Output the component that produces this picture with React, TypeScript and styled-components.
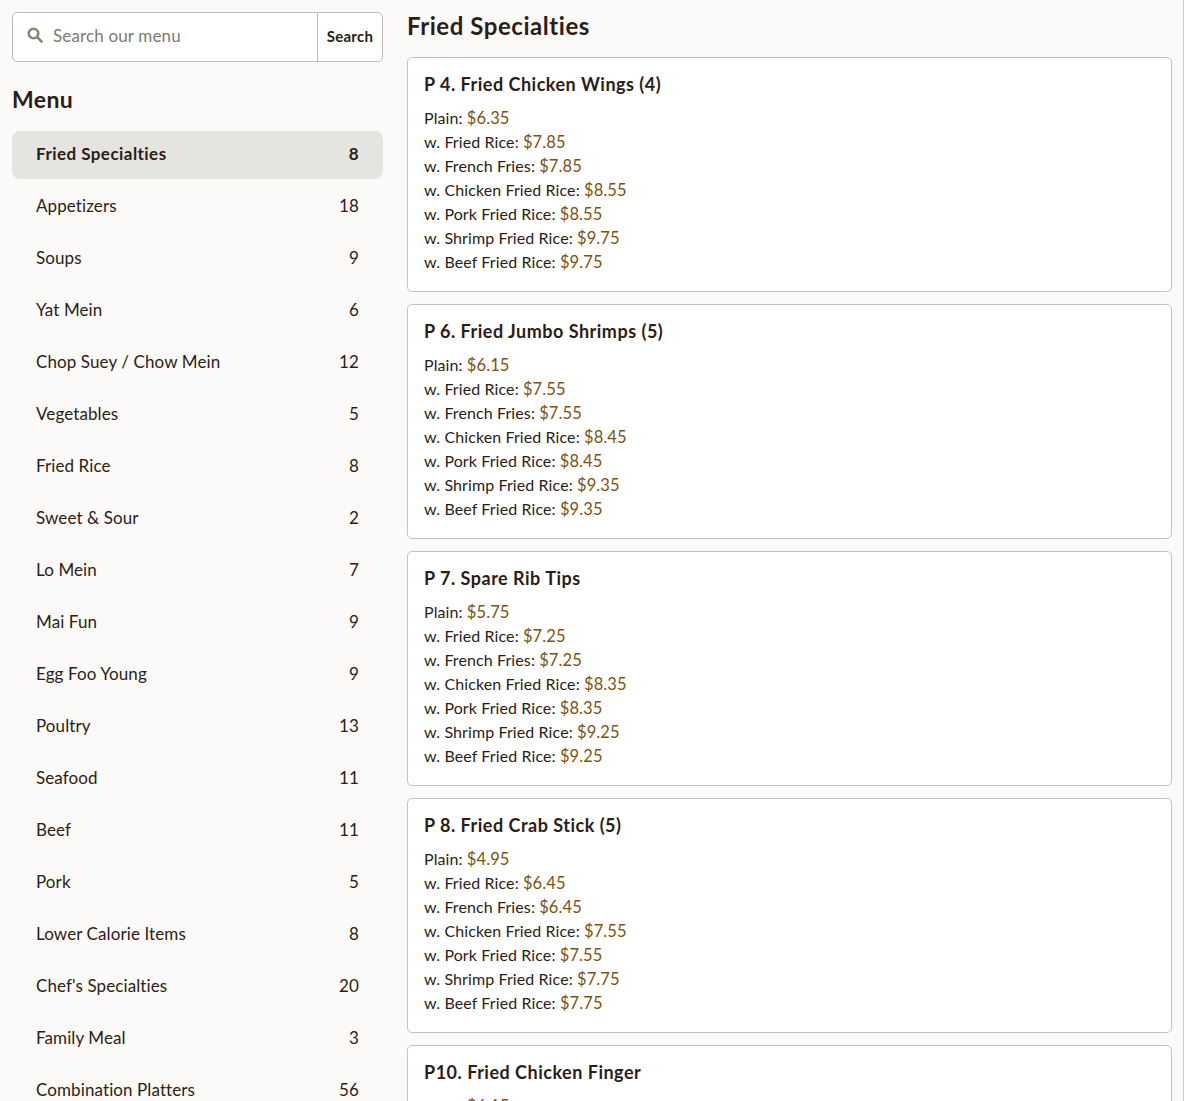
import React from 'react';
import styled, { createGlobalStyle } from 'styled-components';

const GlobalStyle = createGlobalStyle`
  html, body {
    margin: 0;
    height: 1101px;
    overflow: hidden;
    background: #ffffff;
  }
  * {
    box-sizing: border-box;
  }
`;

const Page = styled.div`
  width: 1184px;
  height: 1101px;
  overflow: hidden;
  display: grid;
  grid-template-columns: 371px 765px;
  column-gap: 24px;
  padding: 12px 12px 0;
  background: #fbfaf8;
  border-right: 1px solid #c9c8c5;
  font-family: 'Lato', sans-serif;
  color: #2b1d17;
`;

const Sidebar = styled.aside`
  display: flex;
  flex-direction: column;
`;

const SearchBar = styled.form`
  height: 50px;
  display: flex;
  background: #ffffff;
  border: 1px solid #bdbbb6;
  border-radius: 5px;
`;

const SearchField = styled.div`
  flex: 1;
  display: flex;
  align-items: center;
  gap: 10px;
  padding: 0 0 3px 14px;
  font-size: 17px;
  letter-spacing: 0.15px;
  color: #7d7a74;
`;

const SearchIconBox = styled.svg`
  flex: none;
  margin-top: -2px;
`;

const SearchButton = styled.button`
  width: 65px;
  padding: 0 0 2px;
  border: 0;
  border-left: 1px solid #bdbbb6;
  background: transparent;
  font-family: inherit;
  font-size: 15px;
  font-weight: 700;
  letter-spacing: 0.3px;
  color: #2b1d17;
`;

const SideTitle = styled.h2`
  margin: 23px 0 18px;
  font-size: 23px;
  line-height: 28px;
  font-weight: 700;
  letter-spacing: 0.4px;
`;

const CategoryList = styled.ul`
  list-style: none;
  margin: 0;
  padding: 0;
  display: flex;
  flex-direction: column;
  gap: 4px;
`;

const Category = styled.li<{ $active?: boolean }>`
  height: 48px;
  flex: none;
  display: flex;
  align-items: center;
  justify-content: space-between;
  padding: 0 24px 4px;
  border-radius: 8px;
  font-size: 17px;
  letter-spacing: ${props => (props.$active ? '0.45px' : '0.1px')};
  font-weight: ${props => (props.$active ? 700 : 400)};
  background: ${props => (props.$active ? '#e5e4e1' : 'transparent')};
`;

const Content = styled.main`
  display: flex;
  flex-direction: column;
`;

const SectionTitle = styled.h1`
  margin: 0 0 17px;
  font-size: 24px;
  line-height: 28px;
  font-weight: 700;
  letter-spacing: 0.55px;
`;

const Items = styled.div`
  display: flex;
  flex-direction: column;
  gap: 12px;
`;

const ItemCard = styled.article`
  flex: none;
  height: 235px;
  padding: 13px 16px 0;
  background: #ffffff;
  border: 1px solid #c4c2bd;
  border-radius: 5px;
`;

const ItemName = styled.h3`
  margin: 0 0 9px;
  font-size: 18px;
  line-height: 26px;
  font-weight: 700;
  letter-spacing: 0.5px;
`;

const PriceLine = styled.div`
  font-size: 16px;
  letter-spacing: 0.1px;
  line-height: 24px;
`;

const Price = styled.span`
  font-size: 16.5px;
  color: #7a5410;
`;

const categories: [string, number][] = [
  ['Fried Specialties', 8],
  ['Appetizers', 18],
  ['Soups', 9],
  ['Yat Mein', 6],
  ['Chop Suey / Chow Mein', 12],
  ['Vegetables', 5],
  ['Fried Rice', 8],
  ['Sweet & Sour', 2],
  ['Lo Mein', 7],
  ['Mai Fun', 9],
  ['Egg Foo Young', 9],
  ['Poultry', 13],
  ['Seafood', 11],
  ['Beef', 11],
  ['Pork', 5],
  ['Lower Calorie Items', 8],
  ["Chef's Specialties", 20],
  ['Family Meal', 3],
  ['Combination Platters', 56],
];

const labels = [
  'Plain',
  'w. Fried Rice',
  'w. French Fries',
  'w. Chicken Fried Rice',
  'w. Pork Fried Rice',
  'w. Shrimp Fried Rice',
  'w. Beef Fried Rice',
];

const items = [
  { name: 'P 4. Fried Chicken Wings (4)', prices: ['6.35', '7.85', '7.85', '8.55', '8.55', '9.75', '9.75'] },
  { name: 'P 6. Fried Jumbo Shrimps (5)', prices: ['6.15', '7.55', '7.55', '8.45', '8.45', '9.35', '9.35'] },
  { name: 'P 7. Spare Rib Tips', prices: ['5.75', '7.25', '7.25', '8.35', '8.35', '9.25', '9.25'] },
  { name: 'P 8. Fried Crab Stick (5)', prices: ['4.95', '6.45', '6.45', '7.55', '7.55', '7.75', '7.75'] },
  { name: 'P10. Fried Chicken Finger', prices: ['6.15'] },
];

const SearchIcon = () => (
  <SearchIconBox width="16" height="16" viewBox="0 0 16 16" fill="none" stroke="#8a8772" strokeWidth="2.6">
    <circle cx="6.5" cy="6.5" r="4.8" />
    <path d="M10 10l4.6 4.6" strokeLinecap="round" />
  </SearchIconBox>
);

export default function App() {
  return (
    <>
      <GlobalStyle />
      <Page>
        <Sidebar>
          <SearchBar>
            <SearchField>
              <SearchIcon />
              Search our menu
            </SearchField>
            <SearchButton type="button">Search</SearchButton>
          </SearchBar>
          <SideTitle>Menu</SideTitle>
          <CategoryList>
            {categories.map(([name, count], i) => (
              <Category key={name} $active={i === 0}>
                <span>{name}</span>
                <span>{count}</span>
              </Category>
            ))}
          </CategoryList>
        </Sidebar>
        <Content>
          <SectionTitle>Fried Specialties</SectionTitle>
          <Items>
            {items.map(item => (
              <ItemCard key={item.name}>
                <ItemName>{item.name}</ItemName>
                {item.prices.map((price, i) => (
                  <PriceLine key={labels[i]}>
                    {labels[i]}: <Price>${price}</Price>
                  </PriceLine>
                ))}
              </ItemCard>
            ))}
          </Items>
        </Content>
      </Page>
    </>
  );
}
